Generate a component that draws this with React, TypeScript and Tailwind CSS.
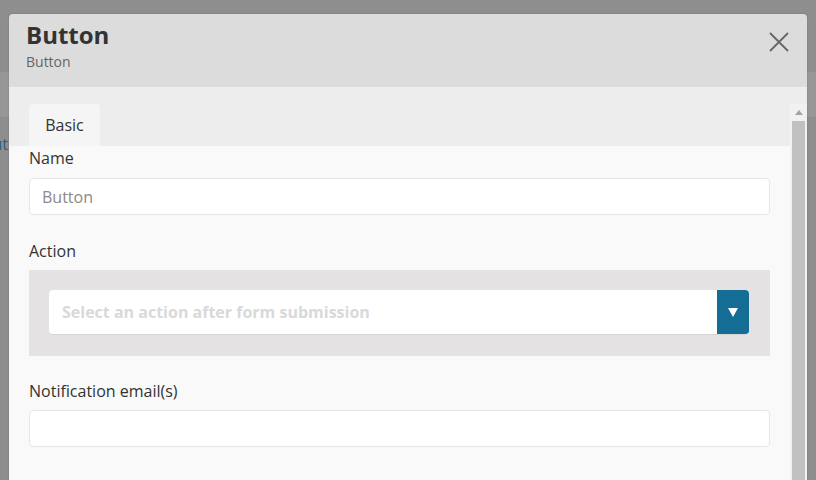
const Label = ({ children, className = "" }: { children: string; className?: string }) => (
  <p className={`text-[16px] leading-[24px] text-[#333] ${className}`}>{children}</p>
);

const TextInput = ({ placeholder, className = "" }: { placeholder?: string; className?: string }) => (
  <div
    className={`h-[37px] rounded-[4px] border border-[#e6e6e6] bg-white px-[12px] flex items-center text-[16px] text-[#8a8a8a] ${className}`}
  >
    {placeholder}
  </div>
);

export default function App() {
  return (
    <div
      className="relative h-[480px] w-[816px] overflow-hidden bg-[#8e8e8e]"
      style={{ fontFamily: '"Open Sans", "Noto Sans", sans-serif' }}
    >
      {/* page behind the overlay */}
      <div className="absolute left-0 right-0 top-[72px] h-[45px] bg-[#979797]" />
      <span className="absolute right-[808px] top-[132px] whitespace-nowrap text-[16px] text-[#2c5f7b]">
        About
      </span>

      {/* modal */}
      <div className="absolute left-[9px] top-[14px] w-[798px] overflow-hidden rounded-t-[4px] shadow-[0_0_2px_rgba(0,0,0,0.2)]">
        <div className="flex h-[74px] items-start justify-between border-b border-[#eeeeee] bg-[#dcdcdc] pl-[17px] pr-[18px]">
          <div className="pt-[5px]">
            <h1 className="text-[24px] font-bold leading-[32px] text-[#333]">Button</h1>
            <p className="mt-[2px] text-[14px] leading-[18px] text-[#666]">Button</p>
          </div>
          <svg className="mt-[18px]" width="20" height="20" viewBox="0 0 20 20" fill="none">
            <path d="M1 1 L19 19 M19 1 L1 19" stroke="#666" strokeWidth="1.8" />
          </svg>
        </div>

        <div className="flex h-[393px]">
          <div className="flex w-[781px] flex-col">
            <div className="bg-[#ededed] pl-[20px] pt-[16px]">
              <div className="flex h-[42px] w-[71px] items-center justify-center rounded-t-[4px] bg-[#f5f5f5] text-[16px] text-[#333]">
                Basic
              </div>
            </div>
            <div className="flex-1 bg-[#f9f9f9] px-[20px]">
              <Label>Name</Label>
              <TextInput placeholder="Button" className="mt-[8px]" />

              <Label className="mt-[24px]">Action</Label>
              <div className="mt-[7px] bg-[#e4e2e3] pl-[20px] pr-[21px] pb-[21px] pt-[20px]">
                <div className="flex h-[45px] overflow-hidden rounded-[4px] border-b border-[#d6d6d6] bg-white">
                  <div className="flex flex-1 items-center px-[13px] text-[16px] font-bold text-[#d9d9d9]">
                    Select an action after form submission
                  </div>
                  <div className="flex w-[32px] items-center justify-center bg-[#136d95]">
                    <svg width="10" height="9" viewBox="0 0 10 9">
                      <path d="M0 0 H10 L5 9 Z" fill="#fff" />
                    </svg>
                  </div>
                </div>
              </div>

              <Label className="mt-[23px]">Notification email(s)</Label>
              <TextInput className="mt-[7px]" />
            </div>
          </div>

          {/* scrollbar */}
          <div className="flex w-[17px] flex-col">
            <div className="h-[16px] bg-[#ededed]" />
            <div className="flex flex-1 flex-col bg-[#f1f1f1]">
              <div className="flex h-[17px] items-center justify-center">
                <svg width="8" height="5" viewBox="0 0 8 5">
                  <path d="M4 0 L8 5 H0 Z" fill="#a3a3a3" />
                </svg>
              </div>
              <div className="mx-[2px] flex-1 bg-[#c1c1c1]" />
            </div>
          </div>
        </div>
      </div>
    </div>
  );
}
